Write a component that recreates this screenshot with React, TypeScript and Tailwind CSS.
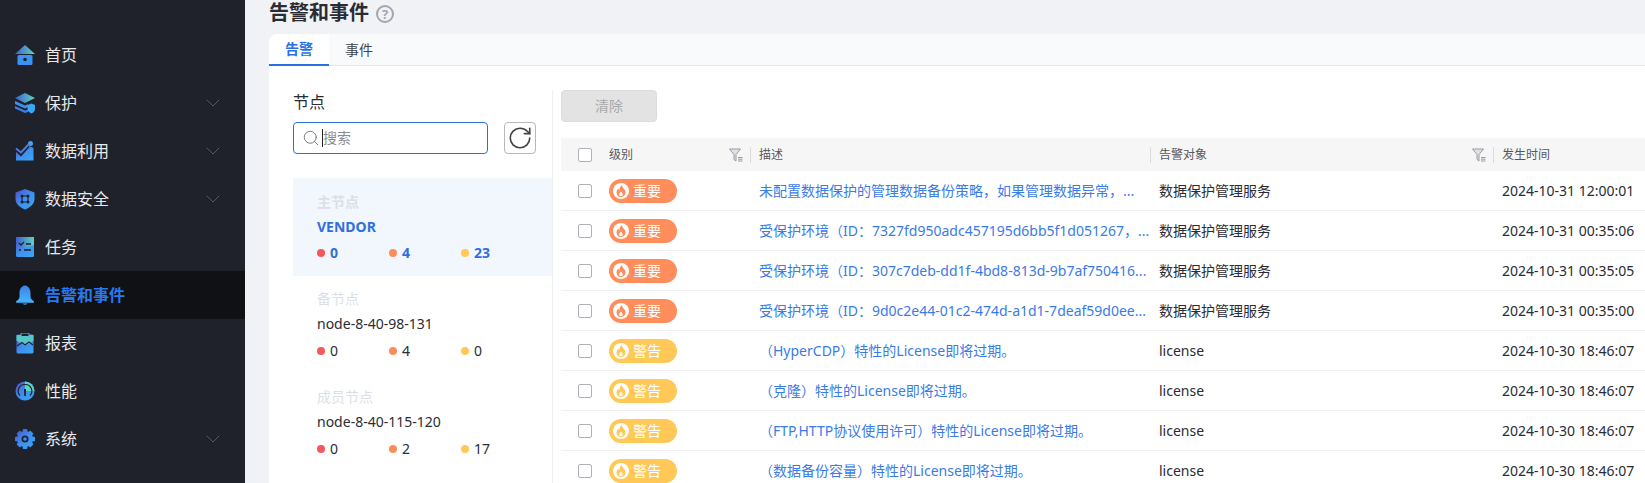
import { ChevronDown, Search, RotateCw } from 'lucide-react';
import type { ReactNode } from 'react';

const FONT = "font-['Noto_Sans','Noto_Sans_CJK_SC',sans-serif]";

function Defs() {
  return (
    <svg width="0" height="0" className="absolute">
      <defs>
        <linearGradient id="menuGrad" x1="0" y1="0" x2="1" y2="1">
          <stop offset="0" stopColor="#4f4fc4" />
          <stop offset="0.5" stopColor="#3f8ff0" />
          <stop offset="1" stopColor="#38a8f5" />
        </linearGradient>
        <linearGradient id="tealGrad" x1="0" y1="0" x2="1" y2="0">
          <stop offset="0" stopColor="#3f5fd0" />
          <stop offset="1" stopColor="#5ed3c0" />
        </linearGradient>
        <linearGradient id="bellGrad" x1="0" y1="0" x2="0" y2="1">
          <stop offset="0" stopColor="#3f7fe8" />
          <stop offset="1" stopColor="#42b4fa" />
        </linearGradient>
      </defs>
    </svg>
  );
}

const icons: Record<string, ReactNode> = {
  home: (
    <>
      <path d="M10 0 L20 9 H0 Z" fill="url(#tealGrad)" />
      <rect x="2.5" y="10" width="15" height="10" rx="1.5" fill="#3a92f2" />
      <circle cx="10" cy="14.5" r="1.8" fill="#1f222b" />
    </>
  ),
  protect: (
    <>
      <path d="M10 0 L20 5 L10 10 L0 5 Z" fill="url(#tealGrad)" />
      <path d="M0 8 L10 12.5 L13 11.2 V14 L10 15.5 L0 11 Z" fill="#3f8ff0" />
      <path d="M0 13 L10 17.5 L13 16.5 V19 L10 20 L0 15.5 Z" fill="#3a7ee8" />
      <path d="M12.5 12 L16.5 10.5 L20 12 V16 C20 18 18.5 19.5 16.5 20.5 C14.5 19.5 12.5 18 12.5 16 Z" fill="#38a8f5" />
    </>
  ),
  usage: (
    <>
      <circle cx="15.5" cy="2.5" r="2.5" fill="#4aa0f0" />
      <path d="M1 19.5 V10 L6 14 L14 5 L18.5 7 V19.5 Z" fill="url(#menuGrad)" />
      <path d="M1 10 L6 14.5 L14 5.5" fill="none" stroke="#1f222b" strokeWidth="1.4" />
      <path d="M1 7.5 L6 11.5 L14 3" fill="none" stroke="#4f7ce0" strokeWidth="2" />
    </>
  ),
  security: (
    <>
      <path d="M10 0 L19.5 3.5 V10 C19.5 15 15 18.5 10 20.5 C5 18.5 0.5 15 0.5 10 V3.5 Z" fill="url(#menuGrad)" />
      <path d="M7 7 L13 7 L13 13 L7 13 Z" fill="none" stroke="#1f222b" strokeWidth="1.1" />
      <circle cx="7" cy="7" r="1.5" fill="#1f222b" />
      <circle cx="13" cy="7" r="1.5" fill="#1f222b" />
      <circle cx="7" cy="13" r="1.5" fill="#1f222b" />
      <circle cx="13" cy="13" r="1.5" fill="#1f222b" />
    </>
  ),
  task: (
    <>
      <rect x="1" y="0" width="18" height="20" rx="1.5" fill="url(#menuGrad)" />
      <path d="M1 0 H19 V8 L10 11 L1 8 Z" fill="url(#tealGrad)" />
      <path d="M4 6 L6 8 L9 5" fill="none" stroke="#1f222b" strokeWidth="1.3" />
      <path d="M11 7 H16 M4 13 H6 M9 13 H16" stroke="#1f222b" strokeWidth="1.4" />
    </>
  ),
  bell: (
    <>
      <path d="M10 0.5 C6 1 4.5 4.5 4.5 8 V12 C4.5 14 2.5 15 1 16.5 H19 C17.5 15 15.5 14 15.5 12 V8 C15.5 4.5 14 1 10 0.5 Z" fill="url(#bellGrad)" />
      <rect x="1" y="16" width="18" height="1.8" rx="0.9" fill="#45b2f8" />
      <path d="M7.5 18.5 H12.5 C12 20 8 20 7.5 18.5 Z" fill="#45b2f8" />
    </>
  ),
  report: (
    <>
      <rect x="1.5" y="1.5" width="17" height="19" rx="1.5" fill="url(#menuGrad)" />
      <path d="M1.5 2 H18.5 L18.5 7.5 L10 13 L1.5 7.5 Z" fill="#57c6c8" />
      <rect x="6" y="0" width="8" height="3.5" rx="1" fill="#1f222b" stroke="#57c6c8" />
      <path d="M2 13 L7 9.5 L10 12 L14 9 L18 12" fill="none" stroke="#1f222b" strokeWidth="1.1" />
    </>
  ),
  perf: (
    <>
      <circle cx="10" cy="10" r="9.5" fill="url(#menuGrad)" />
      <path d="M10 0.5 A9.5 9.5 0 0 1 19.5 10 H10 Z" fill="#5ed3c0" />
      <path d="M10 3.5 A6.5 6.5 0 0 0 5 14.5 M10 3.5 A6.5 6.5 0 0 1 15 14.5" fill="none" stroke="#1f222b" strokeWidth="1.2" />
      <path d="M9 8 H11 L10.8 15 H9.2 Z" fill="#1f222b" />
    </>
  ),
  system: (
    <>
      <path
        d="M8 0 H12 L12.7 3 L15.5 1.7 L18.3 4.5 L17 7.3 L20 8 V12 L17 12.7 L18.3 15.5 L15.5 18.3 L12.7 17 L12 20 H8 L7.3 17 L4.5 18.3 L1.7 15.5 L3 12.7 L0 12 V8 L3 7.3 L1.7 4.5 L4.5 1.7 L7.3 3 Z"
        fill="url(#menuGrad)"
      />
      <circle cx="10" cy="10" r="3.5" fill="#1f222b" />
      <circle cx="10" cy="10" r="1.8" fill="#3f8ff0" />
    </>
  ),
};

const menu = [
  { icon: 'home', label: '首页' },
  { icon: 'protect', label: '保护', arrow: true },
  { icon: 'usage', label: '数据利用', arrow: true },
  { icon: 'security', label: '数据安全', arrow: true },
  { icon: 'task', label: '任务' },
  { icon: 'bell', label: '告警和事件', active: true },
  { icon: 'report', label: '报表' },
  { icon: 'perf', label: '性能' },
  { icon: 'system', label: '系统', arrow: true },
];

function Sidebar() {
  return (
    <aside className="w-[245px] shrink-0 bg-[#1f222b] pt-[31px]">
      {menu.map((m) => (
        <div
          key={m.label}
          className={`flex h-12 items-center pl-[15px] pr-[20px] ${m.active ? 'bg-[#101115]' : ''}`}
        >
          <svg width="20" height="21" viewBox="0 0 20 21" className="shrink-0">
            {icons[m.icon]}
          </svg>
          <span className={`ml-[10px] flex-1 text-base ${m.active ? 'font-bold text-[#2a78f0]' : 'text-[#e8e9ec]'}`}>
            {m.label}
          </span>
          {m.arrow && <ChevronDown size={24} strokeWidth={1} className="text-[#55585f]" />}
        </div>
      ))}
    </aside>
  );
}

function Dot({ color, value, blue }: { color: string; value: number; blue?: boolean }) {
  return (
    <div className="flex w-[72px] items-center gap-[5px]">
      <span className={`h-2 w-2 rounded-full ${color}`} />
      <span className={`text-sm ${blue ? 'font-bold text-[#2f6fe0]' : 'text-[#2a2c33]'}`}>{value}</span>
    </div>
  );
}

function NodeCard({
  title,
  name,
  counts,
  active,
}: {
  title: string;
  name: string;
  counts: number[];
  active?: boolean;
}) {
  return (
    <div className={`h-[98px] pl-6 ${active ? 'bg-[#f2f6fd] pt-[14px]' : 'pt-[13px]'}`}>
      <div className={`text-sm leading-5 text-[#dcdfe7] ${active ? 'font-bold' : ''}`}>{title}</div>
      <div className={`mt-[5px] text-sm leading-5 ${active ? 'font-bold text-[#2f6fe0]' : 'text-[#2a2c33]'}`}>{name}</div>
      <div className={`flex h-5 items-center ${active ? 'mt-[6px]' : 'mt-[7px]'}`}>
        <Dot color="bg-[#f4575c]" value={counts[0]} blue={active} />
        <Dot color="bg-[#fa8e5a]" value={counts[1]} blue={active} />
        <Dot color="bg-[#ffc857]" value={counts[2]} blue={active} />
      </div>
    </div>
  );
}

function FilterIcon() {
  return (
    <svg width="14" height="14" viewBox="0 0 14 14" fill="none" stroke="#9a9ca3" strokeWidth="1">
      <path d="M0.5 1 H11.5 L7 6.5 V13 L5 11.5 V6.5 Z" fill="#dfe0e3" />
      <path d="M9 9.5 H13.5 M9 11.2 H13.5 M9 13 H13.5" />
    </svg>
  );
}

function Badge({ level }: { level: 'major' | 'warn' }) {
  const major = level === 'major';
  return (
    <div
      className={`flex h-6 w-[68px] items-center rounded-full pl-[4px] text-sm text-white ${major ? 'bg-[#ff8e5c]' : 'bg-[#ffc857]'}`}
    >
      <span className="flex h-4 w-4 items-center justify-center rounded-full bg-white">
        <svg width="10" height="12" viewBox="0 0 10 12" fill={major ? '#ff8e5c' : '#ffc857'}>
          <path d="M5.5 0 C6 2.5 9.5 4 9.5 7.5 C9.5 10 7.5 12 5 12 C2.5 12 0.5 10 0.5 7.5 C0.5 5.5 1.5 4.5 2.5 3.5 C2.7 4.5 3 5 3.5 5.3 C3.5 3.5 4 1.5 5.5 0 Z M5 6.5 C4 8 3.2 8.5 3.2 9.5 C3.2 10.5 4 11 5 11 C6 11 6.8 10.3 6.8 9.4 C6.8 8.4 5.5 7.8 5 6.5 Z" fillRule="evenodd" />
        </svg>
      </span>
      <span className="ml-[4px]">{major ? '重要' : '警告'}</span>
    </div>
  );
}

const rows = [
  { level: 'major', desc: '未配置数据保护的管理数据备份策略，如果管理数据异常，...', target: '数据保护管理服务', time: '2024-10-31 12:00:01' },
  { level: 'major', desc: '受保护环境（ID：7327fd950adc457195d6bb5f1d051267，...', target: '数据保护管理服务', time: '2024-10-31 00:35:06' },
  { level: 'major', desc: '受保护环境（ID：307c7deb-dd1f-4bd8-813d-9b7af750416...', target: '数据保护管理服务', time: '2024-10-31 00:35:05' },
  { level: 'major', desc: '受保护环境（ID：9d0c2e44-01c2-474d-a1d1-7deaf59d0ee...', target: '数据保护管理服务', time: '2024-10-31 00:35:00' },
  { level: 'warn', desc: '（HyperCDP）特性的License即将过期。', target: 'license', time: '2024-10-30 18:46:07' },
  { level: 'warn', desc: '（克隆）特性的License即将过期。', target: 'license', time: '2024-10-30 18:46:07' },
  { level: 'warn', desc: '（FTP,HTTP协议使用许可）特性的License即将过期。', target: 'license', time: '2024-10-30 18:46:07' },
  { level: 'warn', desc: '（数据备份容量）特性的License即将过期。', target: 'license', time: '2024-10-30 18:46:07' },
] as const;

const GRID = 'grid grid-cols-[48px_142px_399px_344px_1fr] items-center';

function Checkbox() {
  return <span className="ml-[17px] block h-[14px] w-[14px] rounded-[2px] border border-[#b0b2b8] bg-white" />;
}

function AlarmTable() {
  return (
    <div className="min-w-0 flex-1 pl-[8px]">
      <button className="h-8 w-24 rounded-[4px] border border-[#dcdcdc] bg-[#e3e3e3] text-sm text-[#a9a9a9]">清除</button>
      <div className={`${GRID} mt-4 h-[33px] bg-[#f6f6f6] pt-[1px] text-xs text-[#55575e]`}>
        <Checkbox />
        <div className="flex h-4 items-center justify-between">
          <span>级别</span>
          <div className="flex h-4 items-center gap-[7px]">
            <FilterIcon />
            <span className="h-4 w-px bg-[#dcdcdc]" />
          </div>
        </div>
        <span className="pl-2">描述</span>
        <div className="flex h-4 items-center justify-between">
          <div className="flex h-4 items-center gap-2">
            <span className="h-4 w-px bg-[#dcdcdc]" />
            <span>告警对象</span>
          </div>
          <div className="flex h-4 items-center gap-[7px]">
            <FilterIcon />
            <span className="h-4 w-px bg-[#dcdcdc]" />
          </div>
        </div>
        <span className="pl-2">发生时间</span>
      </div>
      {rows.map((r, i) => (
        <div key={i} className={`${GRID} h-10 border-b border-[#f0f0f0] text-sm text-[#2a2c33]`}>
          <Checkbox />
          <Badge level={r.level} />
          <span className="truncate pl-2 text-[#3a7be8]">{r.desc}</span>
          <span className="pl-[9px]">{r.target}</span>
          <span className="pl-2 whitespace-nowrap">{r.time}</span>
        </div>
      ))}
    </div>
  );
}

export default function App() {
  return (
    <div className={`flex h-[483px] w-[1645px] overflow-hidden bg-[#f1f2f6] ${FONT}`}>
      <Defs />
      <Sidebar />
      <main className="min-w-0 flex-1 pl-6">
        <div className="flex h-[34px] items-start pt-[1px]">
          <h1 className="text-xl font-bold leading-6 text-[#2a2c33]">告警和事件</h1>
          <span className="ml-[7px] mt-[4px] flex h-[18px] w-[18px] items-center justify-center rounded-full border-2 border-[#a3a6b1] text-[13px] font-bold leading-none text-[#a3a6b1]">
            ?
          </span>
        </div>
        <div className="flex h-8 rounded-tl-lg border-b border-[#e6e7ea] bg-[#f9fafc] text-sm">
          <div className="flex h-8 w-[60px] items-center justify-center rounded-tl-lg border-b-2 border-[#2b6fe4] bg-white font-bold text-[#2b6fe4]">
            告警
          </div>
          <div className="flex w-[60px] items-center justify-center text-[#444650]">事件</div>
        </div>
        <div className="flex h-[417px] bg-white pl-6 pt-6">
          <div className="w-[260px] shrink-0 border-r border-[#eef0f4]">
            <div className="-mt-[2px] text-base leading-7 text-[#2a2c33]">节点</div>
            <div className="mt-[6px] flex items-center">
              <div className="flex h-8 w-[195px] items-center rounded-[4px] border border-[#2b6fe4] pl-[8px]">
                <Search size={18} strokeWidth={1} className="text-[#555]" />
                <span className="ml-[2px] h-[18px] w-px bg-[#222]" />
                <span className="text-sm text-[#8a8c93]">搜索</span>
              </div>
              <div className="ml-4 flex h-8 w-8 items-center justify-center rounded-[4px] border border-[#b8b8b8]">
                <RotateCw size={26} strokeWidth={1.5} className="text-[#444]" />
              </div>
            </div>
            <div className="mt-6">
              <NodeCard active title="主节点" name="VENDOR" counts={[0, 4, 23]} />
              <NodeCard title="备节点" name="node-8-40-98-131" counts={[0, 4, 0]} />
              <NodeCard title="成员节点" name="node-8-40-115-120" counts={[0, 2, 17]} />
            </div>
          </div>
          <AlarmTable />
        </div>
      </main>
    </div>
  );
}
